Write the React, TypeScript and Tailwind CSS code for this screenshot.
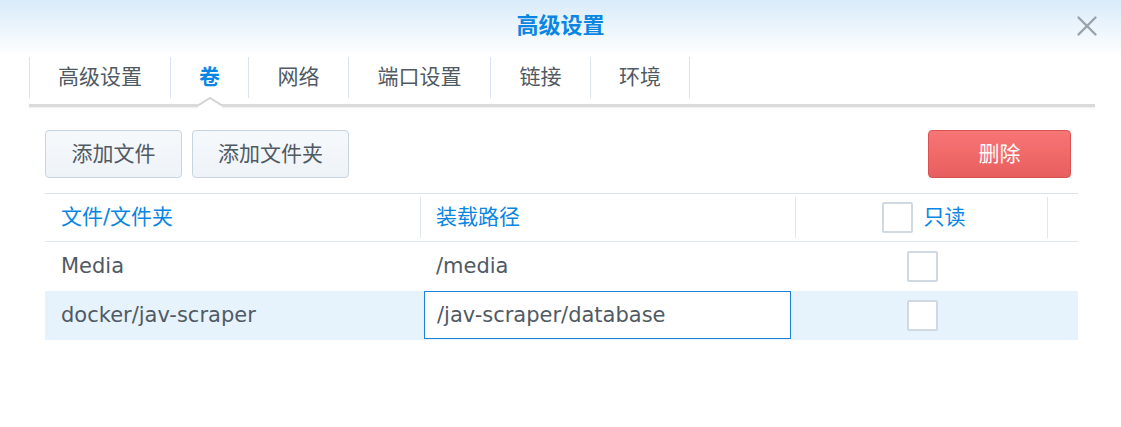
import { X } from "lucide-react";

const tabs = [
  { label: "高级设置", w: "w-[141px]" },
  { label: "卷", w: "w-[78px]" },
  { label: "网络", w: "w-[100px]" },
  { label: "端口设置", w: "w-[142px]" },
  { label: "链接", w: "w-[100px]" },
  { label: "环境", w: "w-[100px]" },
];
const activeTab = 1;

function Checkbox() {
  return <div className="h-[31px] w-[31px] rounded-[2px] border-2 border-[#d0d9e2] bg-white" />;
}

export default function App() {
  return (
    <div
      className="relative h-[427px] w-[1121px] overflow-hidden bg-white text-[#505a64]"
      style={{ fontFamily: '"DejaVu Sans", "Noto Sans CJK SC", sans-serif' }}
    >
      {/* title bar */}
      <div className="relative flex h-[56px] justify-center bg-gradient-to-b from-[#d9ebfa] to-white pt-[11px]">
        <div className="text-[22px] font-bold leading-[30px] text-[#0a86e2]">高级设置</div>
        <button className="absolute right-[17px] top-[9px] text-[#9ba2a9]">
          <X className="h-[34px] w-[34px]" strokeWidth={1.7} />
        </button>
      </div>

      {/* tabs */}
      <div className="ml-[29px] mr-[26px]">
        <div className="mt-[1px] flex h-[41px]">
          {tabs.map((t, i) => (
            <div
              key={t.label}
              className={
                "relative flex items-center justify-center border-l border-[#d9e4ee] text-[21px] leading-none " +
                t.w +
                (i === tabs.length - 1 ? " border-r" : "") +
                (i === activeTab ? " font-bold text-[#0a86e2]" : "")
              }
            >
              {t.label}
              {i === activeTab && (
                <svg
                  className="absolute left-1/2 top-[40px] z-10 -ml-[12px]"
                  width="24"
                  height="12"
                  viewBox="0 0 24 12"
                >
                  <polygon points="0,12 0,8 12,0.5 24,8 24,12" fill="white" />
                  <polyline points="0,8.5 12,1 24,8.5" fill="none" stroke="#d4d4d4" strokeWidth="2" />
                </svg>
              )}
            </div>
          ))}
        </div>
        <div className="mt-[6px] h-[3px] bg-[#dadada] shadow-[0_1px_2px_rgba(0,0,0,0.08)]" />
      </div>

      {/* toolbar */}
      <div className="ml-[45px] mr-[50px] mt-[23px] flex justify-between">
        <div className="flex gap-[10px]">
          <button className="h-[48px] w-[137px] rounded-[4px] border border-[#c8d4df] bg-gradient-to-b from-[#f6f9fc] to-[#eef3f8] text-[21px] leading-none text-[#505a64]">
            添加文件
          </button>
          <button className="h-[48px] w-[157px] rounded-[4px] border border-[#c8d4df] bg-gradient-to-b from-[#f6f9fc] to-[#eef3f8] text-[21px] leading-none text-[#505a64]">
            添加文件夹
          </button>
        </div>
        <button className="h-[48px] w-[143px] rounded-[4px] border border-[#d95252] bg-gradient-to-b from-[#f87575] to-[#e85e5e] text-[21px] leading-none text-white">
          删除
        </button>
      </div>

      {/* table */}
      <div className="ml-[45px] mt-[15px] w-[1033px] border-t border-[#d9e3ec]">
        <div className="grid h-[48px] grid-cols-[376px_375px_252px_30px] border-b border-[#dfe7ef] text-[21px] text-[#0a86e2]">
          <div className="my-[3px] flex items-center border-r border-[#dfe8f0] pl-[16px] leading-none">文件/文件夹</div>
          <div className="my-[3px] flex items-center border-r border-[#dfe8f0] pl-[15px] leading-none">装载路径</div>
          <div className="my-[3px] flex items-center justify-center gap-[11px] border-r border-[#dfe8f0] pl-[4px] leading-none">
            <Checkbox />
            <span>只读</span>
          </div>
          <div />
        </div>

        <div className="grid h-[49px] grid-cols-[376px_375px_252px_30px] text-[21px] leading-none">
          <div className="flex items-center pl-[16px]">Media</div>
          <div className="flex items-center pl-[15px]">/media</div>
          <div className="flex items-center justify-center">
            <Checkbox />
          </div>
          <div />
        </div>

        <div className="grid h-[49px] grid-cols-[376px_375px_252px_30px] bg-[#e6f3fd] text-[21px] leading-none">
          <div className="flex items-center pl-[16px]">docker/jav-scraper</div>
          <div className="flex items-start pl-[3px]">
            <div className="flex h-[48px] w-[367px] items-center border border-[#1f80d8] bg-white pl-[12px]">
              /jav-scraper/database
            </div>
          </div>
          <div className="flex items-center justify-center">
            <Checkbox />
          </div>
          <div />
        </div>
      </div>
    </div>
  );
}
